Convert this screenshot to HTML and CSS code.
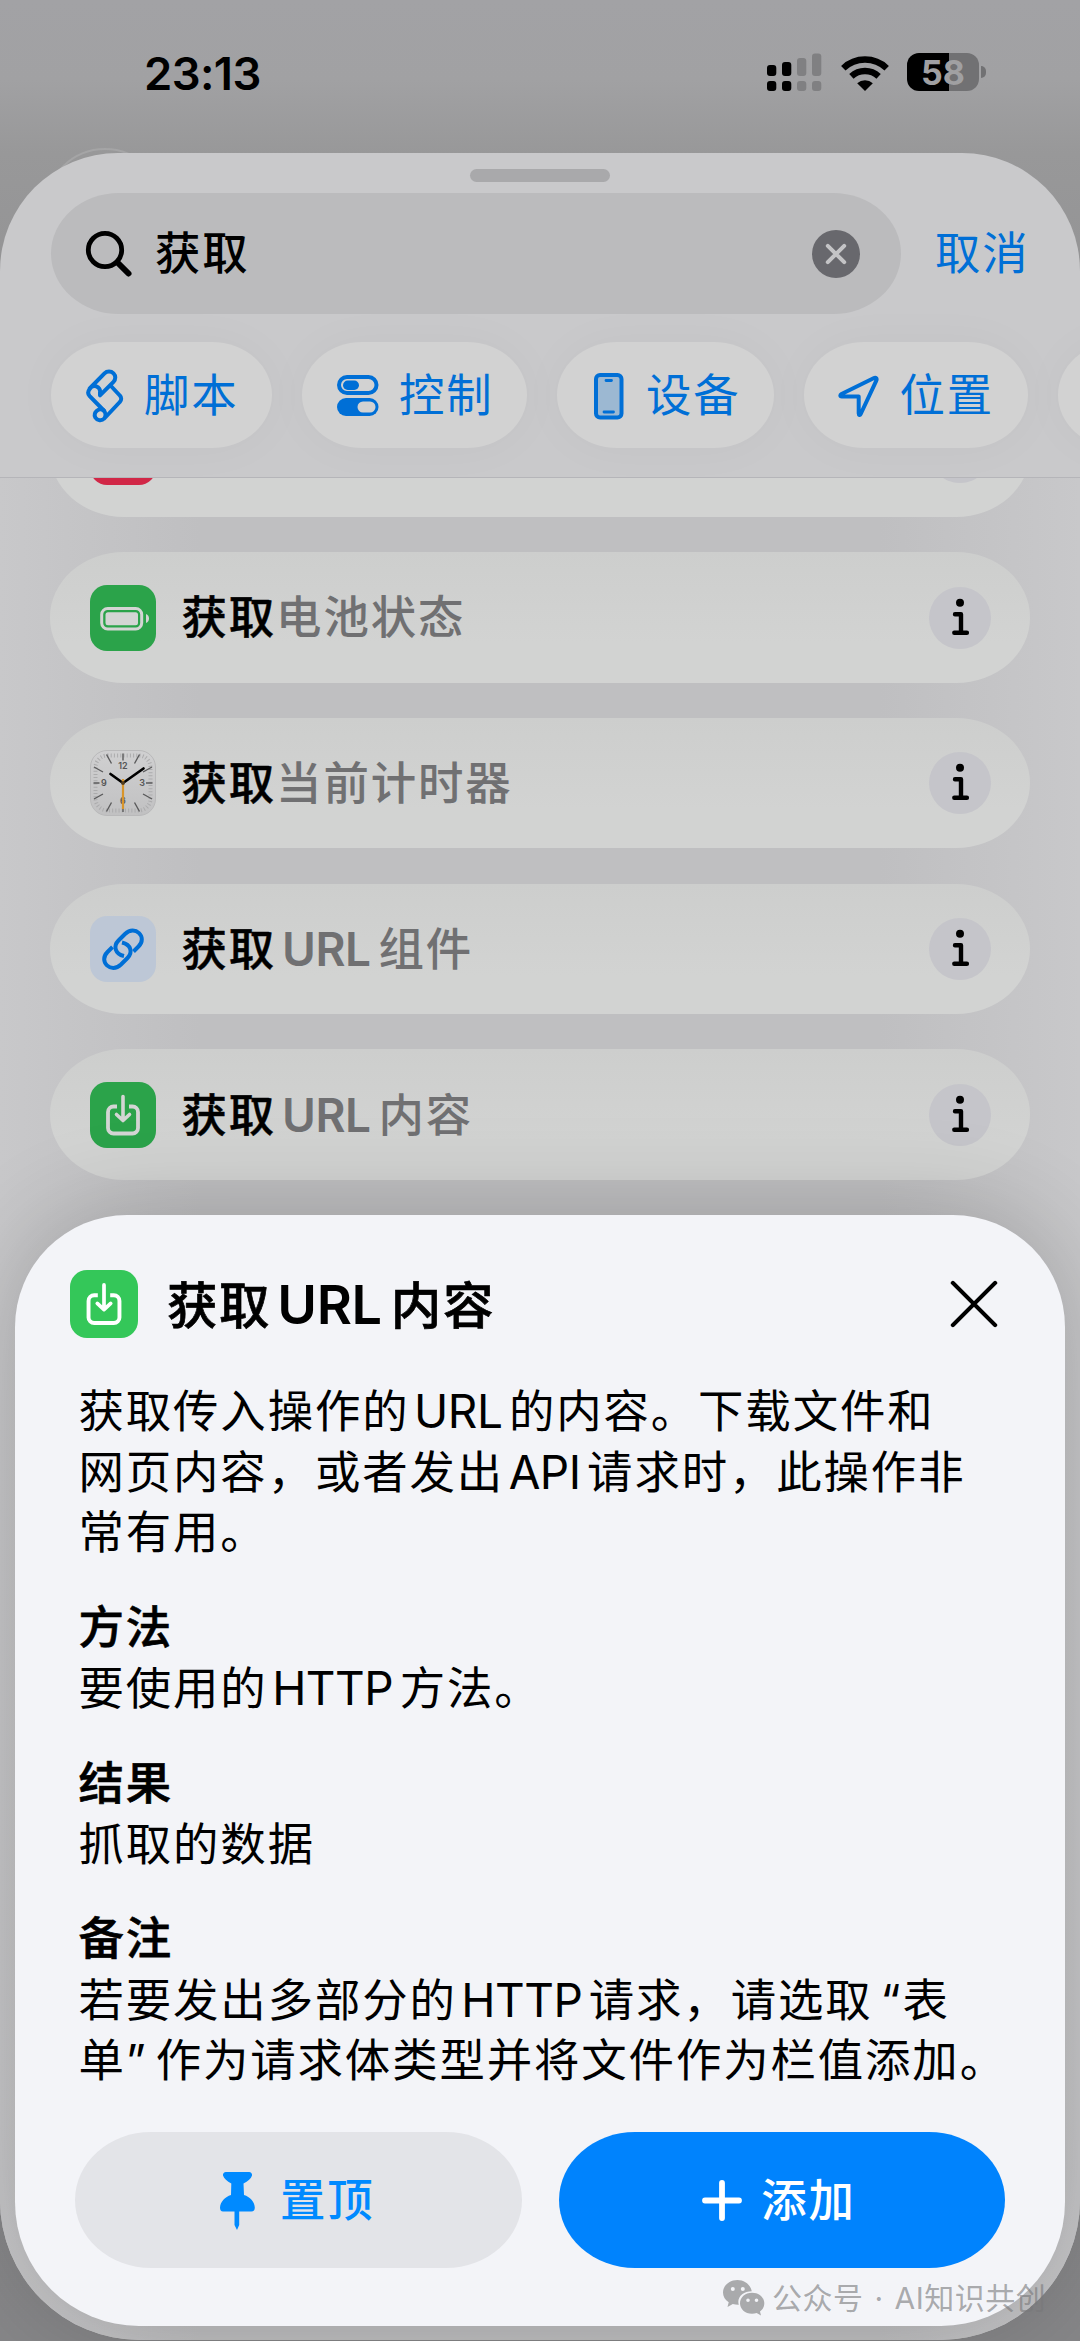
FILE: index.html
```html
<!DOCTYPE html>
<html lang="zh-CN">
<head>
<meta charset="utf-8">
<title>获取 URL 内容</title>
<link rel="stylesheet" href="styles.css">
</head>
<body>
<svg class="defs" aria-hidden="true">
  <symbol id="info" viewBox="0 0 62 62">
    <circle cx="31" cy="15.8" r="4"/>
    <path d="M26 27.2h6v18.6M25.300 45.800h12.600" fill="none" stroke="currentColor" stroke-width="4.400" stroke-linecap="round" stroke-linejoin="round"/>
  </symbol>
  <symbol id="download" viewBox="0 0 66 66">
    <path d="M27 24.500h-3.500a5.500 5.500 0 0 0-5.500 5.500v16a5.500 5.500 0 0 0 5.500 5.500h19a5.500 5.500 0 0 0 5.500-5.500v-16a5.500 5.500 0 0 0-5.500-5.500H39" fill="none" stroke="currentColor" stroke-width="3.800"/>
    <path d="M33 14.500v23M26.500 32.500l6.500 6 6.500-6" fill="none" stroke="currentColor" stroke-width="3.600" stroke-linecap="round" stroke-linejoin="round"/>
  </symbol>
</svg>

<div class="screen">
  <header class="status">
    <span class="time">23:13</span>
    <div class="indicators">
      <svg class="signal" width="56" height="40" viewBox="0 0 56 40">
        <g><rect x="0" y="13" width="9.300" height="11" rx="3"/><rect x="15" y="10" width="9.300" height="14" rx="3"/><rect x="0" y="29" width="9.300" height="10" rx="3"/><rect x="15" y="29" width="9.300" height="10" rx="3"/></g>
        <g fill="#808082"><rect x="30" y="6" width="9.300" height="18" rx="3"/><rect x="45" y="1.500" width="9.300" height="22.500" rx="3"/><rect x="30" y="29" width="9.300" height="10" rx="3"/><rect x="45" y="29" width="9.300" height="10" rx="3"/></g>
      </svg>
      <svg class="wifi" width="50" height="38" viewBox="0 0 50 38">
        <g fill="none" stroke="#000" stroke-width="6.400"><path d="M3.300 14.200a31.500 31.500 0 0 1 43.400 0"/><path d="M11.400 22.300a20 20 0 0 1 27.200 0"/></g>
        <path d="M17.200 29.200a11.500 11.500 0 0 1 15.600 0L25 37z"/>
      </svg>
      <div class="battery"><span>58</span></div>
    </div>
  </header>
  <div class="back-button"></div>

  <main class="sheet">
    <div class="grabber"></div>
    <div class="search-row">
      <div class="search">
        <svg width="48" height="48" viewBox="0 0 48 48" fill="none" stroke="#000"><circle cx="20" cy="20" r="16.700" stroke-width="4.800"/><path d="M32.500 32.500l11 11" stroke-width="6" stroke-linecap="round"/></svg>
        <span class="query">获取</span>
        <svg class="clear" width="48" height="48" viewBox="0 0 48 48"><circle cx="24" cy="24" r="24" fill="#68686d"/><path d="M15.800 15.800l16.400 16.400M32.200 15.800L15.800 32.200" stroke="#c4c4c6" stroke-width="4" stroke-linecap="round"/></svg>
      </div>
      <span class="cancel">取消</span>
    </div>

    <nav class="chips">
      <div class="chip script">
        <svg width="38" height="54" viewBox="0 0 38 54" fill="none" stroke="currentColor" stroke-width="4" stroke-linejoin="round" stroke-linecap="round">
          <path d="M3.700 19.500L18.500 4.300a6.300 6.300 0 0 1 9 0a6 6 0 0 1 0 8.500L14 26.300V23.500a5.500 5.500 0 0 0-10.300-3.500c-2 2.500-2 5 0 7.200L17.800 41.500"/>
          <path d="M24.500 16.500L33.800 26.500a4.500 4.500 0 0 1 0 6.500L18.300 49.500a5.700 5.700 0 0 1-9-1a5.700 5.700 0 0 1 8.500-7c2 2 2 5.500 0.500 8"/>
        </svg>脚本</div>
      <div class="chip control">
        <svg width="42" height="42" viewBox="0 0 42 42">
          <rect x="2" y="2" width="37.500" height="16" rx="8" fill="none" stroke="currentColor" stroke-width="4"/><rect x="6" y="5.500" width="16" height="9.500" rx="4.700" fill="currentColor"/>
          <rect x="0" y="23" width="41.500" height="18" rx="9" fill="currentColor"/><rect x="20.500" y="26.500" width="18" height="11" rx="5.500" fill="#d2d2d2"/>
        </svg>控制</div>
      <div class="chip device">
        <svg width="30" height="47" viewBox="0 0 30 47"><rect x="2" y="2" width="25.500" height="42.500" rx="4" fill="#9cb8d2" stroke="currentColor" stroke-width="4"/><path d="M12 7.500h5.500M10 39h9.500" stroke="currentColor" stroke-width="2.800" stroke-linecap="round"/></svg>设备</div>
      <div class="chip place">
        <svg width="42" height="43" viewBox="0 0 42 43" fill="none" stroke="currentColor" stroke-width="4" stroke-linejoin="round"><path d="M3.500 19L35.500 3.200C38 2 39.300 3.300 38.200 5.800L22.700 39c-.8 1.500-2 1.200-2-.5V21.500H3.800C2 21.500 1.800 20 3.500 19z"/></svg>位置</div>
      <div class="chip more"></div>
    </nav>

    <section class="list">
      <div class="row"><div class="tile red"></div><span class="label"></span><svg class="info"><use href="#info"/></svg></div>
      <div class="row">
        <div class="tile green"><svg viewBox="0 0 66 66"><rect x="11.700" y="23.500" width="40" height="20.500" rx="6" fill="none" stroke="currentColor" stroke-width="3"/><rect x="15.500" y="27.200" width="32.500" height="13" rx="2.500" fill="currentColor"/><path d="M56 29c4 1 4 8 0 9z" fill="currentColor"/></svg></div>
        <span class="label"><b>获取</b>电池状态</span><svg class="info"><use href="#info"/></svg>
      </div>
      <div class="row">
        <div class="tile clock"><svg viewBox="0 0 66 66">
          <rect x="5.500" y="5.500" width="55" height="55" rx="12" fill="none" stroke="#acacad" stroke-width="4" stroke-dasharray="1 2.200"/>
          <path d="M33 3.500v7M33 55v7M3.500 33h6M56 33h6.500M16.500 4.500l5 9M49.500 4.500l-5 9M4 17l9 5M62 17l-9 5M4 49l9-5M62 49l-9-5M16.500 61.500l5-9M49.500 61.500l-5-9" stroke="#5a5a5b" stroke-width="1.400" fill="none"/>
          <g class="numerals"><text x="33" y="18.500">12</text><text x="52" y="36">3</text><text x="33" y="54">6</text><text x="14" y="36">9</text></g>
          <path d="M33 33L20.500 24M33 33L53.500 18.500" stroke="#000" stroke-width="2.700" stroke-linecap="round"/>
          <path d="M33 29v30" stroke="#d8952b" stroke-width="2.200"/><circle cx="33" cy="33" r="1.900" fill="#533d1d"/>
        </svg></div>
        <span class="label"><b>获取</b>当前计时器</span><svg class="info"><use href="#info"/></svg>
      </div>
      <div class="row">
        <div class="tile link"><svg viewBox="0 0 66 66" fill="none" stroke="#006fd6" stroke-width="4" stroke-linecap="butt"><path d="M34 40c-9-2-11-10-5.500-15.500l6.500-6.500c10-9.500 23 3 13.500 12.500l-5 5"/><path d="M32 26.500c9 2 11 10 5.500 15.500l-6.500 6.500c-10 9.500-23-3-13.500-12.500l5-5"/></svg></div>
        <span class="label"><b>获取</b><span class="lat">URL</span>组件</span><svg class="info"><use href="#info"/></svg>
      </div>
      <div class="row">
        <div class="tile green"><svg><use href="#download"/></svg></div>
        <span class="label"><b>获取</b><span class="lat">URL</span>内容</span><svg class="info"><use href="#info"/></svg>
      </div>
    </section>
  </main>

  <article class="detail">
    <header class="detail-head">
      <div class="detail-tile"><svg><use href="#download"/></svg></div>
      <h1>获取<span class="lat">URL</span>内容</h1>
      <svg class="close" width="48" height="48" viewBox="0 0 50 50"><path d="M3 3l44 44M47 3L3 47" stroke="#000" stroke-width="4.400" stroke-linecap="round"/></svg>
    </header>
    <div class="copy">
      <p>获取传入操作的<span class="lat">URL</span>的内容。下载文件和<br>网页内容，或者发出<span class="lat">API</span>请求时，此操作非<br>常有用。</p>
      <section><h2>方法</h2><p>要使用的<span class="lat">HTTP</span>方法。</p></section>
      <section><h2>结果</h2><p>抓取的数据</p></section>
      <section><h2>备注</h2><p>若要发出多部分的<span class="lat">HTTP</span>请求，请选取<span class="open">“</span>表<br>单<span class="shut">”</span>作为请求体类型并将文件作为栏值添加。</p></section>
    </div>
    <footer class="actions">
      <div class="button pin"><svg width="38" height="58" viewBox="0 0 38 58"><path d="M6 0h23a3 3 0 0 1 3 3.500c-.8 3-4 5.800-8.500 8l.5 11.500c6 2 10.500 6.500 10.800 12.500c0 2.500-1 4-3.500 4H19.200V53L17 58l-2.500-5V39.500H3c-2 0-3-1.500-3-4c.5-6 5-10.500 11-12.500l.3-11.500C7 9.300 4 6.500 3 3.500A3 3 0 0 1 6 0z" fill="currentColor"/></svg>置顶</div>
      <div class="button add"><svg width="40" height="41" viewBox="0 0 40 41"><path d="M20 3v35M3 20.500h34" stroke="currentColor" stroke-width="5.800" stroke-linecap="round"/></svg>添加</div>
    </footer>
  </article>

  <div class="watermark">
    <svg width="42" height="36" viewBox="0 0 42 36"><path fill-rule="evenodd" d="M14.500 0C6.500 0 0 5.500 0 12.500c0 4 2 7.300 5.700 9.700L4.500 27l5.300-3c2 .6 4 .9 6 .8C13.500 17.500 20 11.300 28.800 11.300C27.500 4.500 21.500 0 14.500 0zM9.800 7a2 2 0 1 1 0 4 2 2 0 0 1 0-4zm10 0a2 2 0 1 1 0 4 2 2 0 0 1 0-4z"/><path fill-rule="evenodd" d="M29 12.800c-7 0-12 4.700-12 10.500s5 10.500 12 10.500c1.700 0 3.200-.3 4.700-.8L38 35.500 37 31.500c2.700-2 4.300-4.800 4.300-8.200c0-5.800-5.300-10.500-12.300-10.500zM25 18.500a1.800 1.800 0 1 1 0 3.600 1.800 1.800 0 0 1 0-3.600zm8.500 0a1.800 1.800 0 1 1 0 3.600 1.800 1.800 0 0 1 0-3.600z"/></svg>
    <span>公众号 · AI知识共创</span>
  </div>
</div>
</body>
</html>
```
FILE: styles.css
```css
* { box-sizing: border-box; margin: 0; padding: 0; }

body {
  width: 1080px;
  font-family: Inter, "Noto Sans CJK SC", sans-serif;
  font-size: 45.4px;
  letter-spacing: 1.900px;
  line-height: 60.4px;
  color: #000;
}

svg { display: block; flex: none; }
.defs { position: absolute; width: 0; height: 0; }

.screen {
  position: relative;
  width: 1080px;
  height: 2341px;
  overflow: hidden;
  background: linear-gradient(#a2a2a5 0, #a1a1a3 80px, #989899 153px, #8c8c8e 500px, #868688 2341px);
}

/* Status bar */
.status {
  height: 153px;
  padding: 43px 94px 0 144px;
  display: flex;
  justify-content: space-between;
}
.time { font-weight: 600; font-size: 45.4px; letter-spacing: -0.600px; line-height: 62px; }
.indicators { display: flex; height: 40px; margin: 9px 7px 0 0; }
.wifi { margin: 2px 17px 0 17px; }
.battery {
  position: relative;
  width: 72px;
  height: 38px;
  margin-top: 1px;
  border-radius: 12px;
  background: linear-gradient(90deg, #000 42px, #717173 42px);
  color: #a0a0a2;
  font-size: 34px;
  font-weight: 700;
  letter-spacing: 0;
  line-height: 39px;
  text-align: center;
}
.battery::after {
  content: "";
  position: absolute;
  left: 74px;
  top: 13px;
  width: 5px;
  height: 12px;
  border-radius: 0 6px 6px 0;
  background: #717173;
}
.back-button {
  position: absolute;
  left: 45px;
  top: 148px;
  width: 120px;
  height: 120px;
  border: 2px solid #a5a5a6;
  border-radius: 50%;
}

/* Action picker sheet */
.sheet {
  position: relative;
  height: 2187px;
  border-radius: 118px 118px 140px 140px;
  overflow: hidden;
  background: #c9c9cb;
  display: flex;
  flex-direction: column;
}
.grabber { flex: none; width: 140px; height: 12.500px; margin: 16px auto 0; border-radius: 7px; background: #a9a9ab; }
.search-row { display: flex; align-items: center; margin-top: 11.800px; padding-left: 51px; }
.search {
  display: flex;
  align-items: center;
  width: 850px;
  height: 121px;
  padding: 0 41px 0 34px;
  border-radius: 68px / 60.500px;
  background: #bbbbbd;
}
.query { margin-left: 22px; padding-top: 1px; font-weight: 500; }
.clear { margin-left: auto; }
.cancel { margin-left: 34px; padding-top: 1px; color: #006fd6; }

.chips { display: flex; gap: 30px; margin-top: 28px; padding-left: 51px; height: 106px; }
.chip {
  flex: none;
  display: flex;
  align-items: center;
  gap: 20px;
  width: 221px;
  padding: 1.500px 0 0 35px;
  border-radius: 60px / 53px;
  background: #d2d2d2;
  color: #006fd6;
  box-shadow: 0 0 50px rgba(0, 0, 0, .03);
}
.chip.control { width: 225px; }
.chip.device { width: 216.500px; padding-left: 37px; gap: 22px; }
.chip.place { width: 224px; padding-left: 34px; }

.list {
  flex: 1;
  display: flex;
  flex-direction: column;
  justify-content: flex-start;
  gap: 35.400px;
  margin-top: 29px;
  padding: 0 50px;
  overflow: hidden;
  border-top: 1px solid #b5b5b9;
  background: linear-gradient(90deg, #c8c8ca, #bfbfc1 200px, #bfbfc1 880px, #c8c8ca);
}
.row {
  flex: none;
  display: flex;
  align-items: center;
  height: 130.300px;
  padding: 0 39.500px 0 40px;
  border-radius: 74px / 65px;
  background: linear-gradient(#cdcecd, #d2d3d2 70%);
}
.row:first-child { margin-top: -91.600px; }
.tile { width: 66px; height: 66px; border-radius: 17px; color: #d4d5d4; overflow: hidden; }
.tile svg { width: 66px; height: 66px; }
.red { background: #d12747; }
.green { background: #2ba34a; }
.link { background: #bdc7d6; }
.clock { background: linear-gradient(#d0d0d1, #c1c1c2); border: 1px solid #b9b9ba; }
.clock svg { margin: -1px; }
.numerals { font: 600 9px Inter, sans-serif; letter-spacing: 0; fill: #555; text-anchor: middle; }
.label { margin-left: 25.500px; padding-top: 2px; font-weight: 500; color: #707072; white-space: nowrap; }
.label b { font-weight: 500; color: #000; -webkit-text-stroke: 0.500px currentColor; }
.info { width: 62px; height: 62px; margin-left: auto; border-radius: 50%; background: #c5c5ca; }

.lat { margin: 0 6.500px 0 4.500px; font-size: 46px; letter-spacing: -0.500px; }
.label .lat { margin: 0 8px 0 6px; font-weight: 600; }

/* Detail card */
.detail {
  position: absolute;
  left: 15px;
  top: 1215px;
  width: 1050px;
  height: 1111px;
  padding: 55px 60px 58px;
  border-radius: 112px 112px 124px 124px;
  background: #f3f4f8;
  box-shadow: 0 0 100px rgba(0, 0, 0, .2);
  display: flex;
  flex-direction: column;
}
.detail-head { display: flex; align-items: center; height: 68px; padding-right: 7px; margin-left: -5px; }
.detail-tile { width: 68px; height: 68px; border-radius: 17px; background: #34c759; color: #fff; }
.detail-tile svg { width: 68px; height: 68px; }
h1 { margin: 4px 0 0 29px; font-size: 50.500px; font-weight: 500; letter-spacing: 1.600px; white-space: nowrap; -webkit-text-stroke: 0.700px currentColor; }
h1 .lat { margin: 0 9px 0 6px; font-size: 54px; font-weight: 600; letter-spacing: -0.300px; -webkit-text-stroke: 0; }
.close { margin-left: auto; }
.copy { display: flex; flex-direction: column; gap: 34.300px; margin: 42.500px 0 0 3.500px; white-space: nowrap; }
h2 { font-size: 45.400px; font-weight: 500; line-height: 60.400px; -webkit-text-stroke: 0.600px currentColor; }
.open { margin-left: 8px; }
.shut { margin-right: 8px; }

.actions { display: flex; gap: 37px; margin-top: auto; }
.button {
  flex: none;
  display: flex;
  align-items: center;
  justify-content: center;
  gap: 22px;
  width: 446.500px;
  height: 136px;
  padding: 1.500px 2px 0 0;
  border-radius: 76px / 68px;
  font-weight: 500;
}
.pin { background: #e3e4e8; color: #008aff; }
.add { padding-right: 6px; background: #0083fd; color: #fff; gap: 19.500px; }

.watermark {
  position: absolute;
  left: 723px;
  top: 2279.500px;
  display: flex;
  align-items: center;
  gap: 7px;
  font-size: 30px;
  letter-spacing: 0.500px;
  word-spacing: 2px;
  line-height: 36px;
  color: rgba(120, 120, 122, .62);
  fill: #a9aaac;
  white-space: nowrap;
}
```
